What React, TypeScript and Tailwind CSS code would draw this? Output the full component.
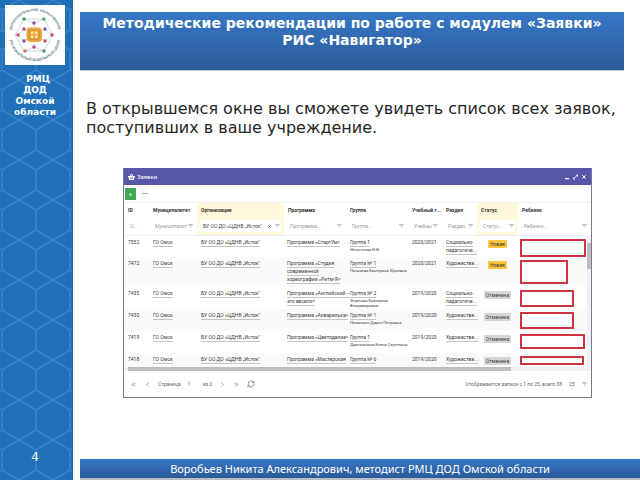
import React from 'react';
import { ChevronLeft, ChevronRight, ChevronsLeft, ChevronsRight, RefreshCw, X } from 'lucide-react';

interface Application {
  id: string;
  program: string[];
  group: string;
  teacher: string[];
  year: string;
  section: string[];
  status: string;
  rowClass: string;
  boxClass: string;
}

const ORGANIZATION = 'БУ ОО ДО «ЦДНВ „Исток"';

const applications: Application[] = [
  {
    id: '7552',
    program: ['Программа «СтартУм»'],
    group: 'Группа 1',
    teacher: ['Непытнова Н.В.'],
    year: '2020/2021',
    section: ['Социально-', 'педагогиче...'],
    status: 'Новая',
    rowClass: 'h-[22px]',
    boxClass: 'w-[66px] h-[18px]',
  },
  {
    id: '7472',
    program: ['Программа «Студия', 'современной', 'хореографии «Ритм-Я»'],
    group: 'Группа № 1',
    teacher: ['Пискаева Екатерина Юрьевна'],
    year: '2020/2021',
    section: ['Художестве...'],
    status: 'Новая',
    rowClass: 'h-[30px]',
    boxClass: 'w-[48px] h-[24px]',
  },
  {
    id: '7435',
    program: ['Программа «Английский –', 'это весело»'],
    group: 'Группа № 2',
    teacher: ['Эгаитова Екатерина', 'Владимировна'],
    year: '2019/2020',
    section: ['Социально-', 'педагогиче...'],
    status: 'Отменена',
    rowClass: 'h-[22px]',
    boxClass: 'w-[54px] h-[17px]',
  },
  {
    id: '7430',
    program: ['Программа «Акварелька»'],
    group: 'Группа № 1',
    teacher: ['Пешкович Дарья Петровна'],
    year: '2019/2020',
    section: ['Художестве...'],
    status: 'Отменена',
    rowClass: 'h-[22px]',
    boxClass: 'w-[54px] h-[17px]',
  },
  {
    id: '7419',
    program: ['Программа «Цветоделие»'],
    group: 'Группа 1',
    teacher: ['Двигальская Елена Сергеевна'],
    year: '2019/2020',
    section: ['Художестве...'],
    status: 'Отменена',
    rowClass: 'h-[22px]',
    boxClass: 'w-[65px] h-[15px]',
  },
  {
    id: '7418',
    program: ['Программа «Мастерская'],
    group: 'Группа № 6',
    teacher: [],
    year: '2019/2020',
    section: ['Художестве...'],
    status: 'Отменена',
    rowClass: 'h-[14px]',
    boxClass: 'w-[64px] h-[9px]',
  },
];

const columns = [
  { title: 'ID', filter: 'О...', width: 'w-[25px]' },
  { title: 'Муниципалитет', filter: 'Муниципалит', width: 'w-[48px]' },
  { title: 'Организация', filter: 'Организация', value: ORGANIZATION, width: 'w-[87px]', active: true },
  { title: 'Программа', filter: 'Программа...', width: 'w-[62px]' },
  { title: 'Группа', filter: 'Группа...', width: 'w-[62px]' },
  { title: 'Учебный г...', filter: 'Учебны', width: 'w-[34px]' },
  { title: 'Раздел', filter: 'Раздел...', width: 'w-[35px]' },
  { title: 'Статус', filter: 'Статус...', width: 'w-[41px]', active: true },
  { title: 'Ребенок', filter: 'Ребенок...', width: 'w-auto' },
];

const logoDots = [
  { x: 24, y: 19, color: '#3f9a5a' },
  { x: 44, y: 19, color: '#4aa564' },
  { x: 34, y: 23, color: '#8a4fa0' },
  { x: 24, y: 29, color: '#a0519c' },
  { x: 45, y: 29, color: '#7a52a8' },
  { x: 18, y: 35, color: '#c9486f' },
  { x: 52, y: 35, color: '#d04a62' },
  { x: 24, y: 41, color: '#8a4fa0' },
  { x: 45, y: 41, color: '#c9486f' },
  { x: 34, y: 47, color: '#c2487f' },
  { x: 25, y: 51, color: '#dd6d52' },
  { x: 44, y: 51, color: '#4a9a78' },
];

const Logo: React.FC = () => (
  <svg viewBox="5 5 60 60" className="w-[60px] h-[60px] bg-white">
    <defs>
      <path id="arc-top" d="M11 35a24 24 0 0 1 48 0" />
      <path id="arc-bottom" d="M9 35a26 26 0 0 0 52 0" />
    </defs>
    <g fill="#5d7f8d" fontFamily="Liberation Sans, sans-serif" fontWeight="700" fontSize="3.6" textAnchor="middle">
      <text>
        <textPath href="#arc-top" startOffset="50%">ДОПОЛНИТЕЛЬНОЕ ОБРАЗОВАНИЕ</textPath>
      </text>
      <text>
        <textPath href="#arc-bottom" startOffset="50%">РЕГИОНАЛЬНЫЙ МОДЕЛЬНЫЙ ЦЕНТР</textPath>
      </text>
    </g>
    <g fill="none" stroke="#a9b9c6" strokeWidth="0.6">
      <path d="M24 19h20l9 16-9 16H24l-9-16z" />
      <path d="M24 19l10 4 10-4M24 29l-6 6 6 6M45 29l7 6-7 6M25 51l9-4 10 4M34 23v24M24 29l21 12M45 29L24 41" />
    </g>
    {logoDots.map((dot) => (
      <circle key={`${dot.x}-${dot.y}`} cx={dot.x} cy={dot.y} r="1.7" fill={dot.color} />
    ))}
    <rect x="26.5" y="27.5" width="15.5" height="14.5" rx="4" fill="#e9a73b" />
    <rect x="29" y="30" width="10.5" height="9.5" rx="2" fill="none" stroke="#c9842c" strokeWidth="0.7" />
    <path d="M31 31.500h2.500v2.500H31zM35 31.500h2.500v2.500H35zM31 35.500h2.500V38H31zM35 35.500h2.500V38H35z" fill="#fbe6a6" />
  </svg>
);

const Sidebar: React.FC = () => (
  <aside className="relative w-[73px] shrink-0 flex flex-col items-center bg-[#1f70b9] border-r border-[#2b62a8] pt-[5px] pb-[15px] pr-[2px] text-white">
    <svg className="absolute inset-0 w-full h-full" aria-hidden="true">
      <defs>
        <pattern id="hexagons" x="2" y="10" width="34" height="40" patternUnits="userSpaceOnUse">
          <path d="M0 0v20M34 0v20M0 20l34 20M34 20L0 40" fill="none" stroke="#3f87ce" strokeWidth="1.2" />
        </pattern>
      </defs>
      <rect width="100%" height="100%" fill="url(#hexagons)" />
    </svg>
    <div className="relative">
      <Logo />
    </div>
    <p className="relative mt-[9px] font-bold text-[9px] leading-[11px] text-center">
      &nbsp;&nbsp;РМЦ
      <br />
      ДОД
      <br />
      Омской
      <br />
      области
    </p>
    <span className="relative mt-auto text-[12px] leading-4">4</span>
  </aside>
);

const FilterIcon: React.FC = () => (
  <svg viewBox="0 0 8 6" className="w-[5px] h-1 shrink-0" fill="none" stroke="#9a9a9a">
    <path d="M0 .5h8M1.500 2.500h5M3 5h2" />
  </svg>
);

const WindowTitle: React.FC = () => (
  <div className="flex items-center h-[17px] px-1 bg-[#5856a8] text-white">
    <svg viewBox="0 0 14 12" className="w-[7px] h-[6px]" fill="currentColor">
      <path d="M6 0h2l3 4h3v2h-1l-1.500 6h-9L1 6H0V4h3zm.9 1.500L5 4h4zM4 6.500v4h1v-4zm2.500 0v4h1v-4zm2.500 0v4h1v-4z" />
    </svg>
    <h2 className="ml-[2px] text-[6px] leading-[8px]">Заявки</h2>
    <div className="ml-auto flex items-center gap-[3px]">
      <button type="button" aria-label="Свернуть">
        <svg viewBox="0 0 6 6" className="w-[5px] h-[6px]" stroke="currentColor" strokeWidth="1.500">
          <path d="M0 5h5" />
        </svg>
      </button>
      <button type="button" aria-label="Развернуть">
        <svg viewBox="0 0 6 6" className="w-[5px] h-[6px]" fill="none" stroke="currentColor">
          <path d="M1 5l4-4M3.500 .7h2v2M.6 3.500v2h2" />
        </svg>
      </button>
      <button type="button" aria-label="Закрыть">
        <X className="w-[6px] h-[6px]" strokeWidth={4} />
      </button>
    </div>
  </div>
);

const Toolbar: React.FC = () => (
  <div className="flex items-center gap-1 h-[17px] px-px">
    <button type="button" aria-label="Добавить" className="w-[11px] h-3 bg-[#43a852] text-white text-[6px] leading-[8px]">
      +
    </button>
    <button type="button" aria-label="Ещё" className="w-[10px] h-3 bg-[#fafafa] text-[#777] text-[6px] leading-[8px]">
      •••
    </button>
  </div>
);

const CellLink: React.FC<{ href: string; lines: string[] }> = ({ href, lines }) => (
  <a href={href} className="block">
    {lines.map((line) => (
      <span key={line} className="block w-fit leading-[7px] border-b border-[#c4c4c4]">
        {line}
      </span>
    ))}
  </a>
);

const ApplicationsTable: React.FC = () => (
  <div className="relative overflow-hidden border-t border-[#f0f0f0]">
    <table className="w-full table-fixed border-collapse text-left">
      <colgroup>
        {columns.map((column) => (
          <col key={column.title} className={column.width} />
        ))}
      </colgroup>
      <thead>
        <tr className="h-[15px]">
          {columns.map((column) => (
            <th
              key={column.title}
              className={`pl-1 pr-0 py-0 font-bold leading-[7px] text-[#333] whitespace-nowrap ${column.active ? 'bg-[#fff8dc]' : ''}`}
            >
              {column.title}
            </th>
          ))}
        </tr>
        <tr className="h-[17px] border-b border-[#eeeeee]">
          {columns.map((column) => (
            <td key={column.title} className={`px-[3px] py-0 ${column.active ? 'bg-[#fff8dc]' : ''}`}>
              <div className="flex items-center h-3 pl-[3px] pr-px bg-white">
                <input
                  type="text"
                  aria-label={column.title}
                  placeholder={column.filter}
                  defaultValue={column.value}
                  className="min-w-0 flex-1 leading-[8px] text-[#444] placeholder:text-[#999] outline-none"
                />
                {column.value && <X className="w-[5px] h-[5px] mr-[3px] text-[#666]" strokeWidth={3} />}
                {column.title !== 'ID' && <FilterIcon />}
              </div>
            </td>
          ))}
        </tr>
      </thead>
      <tbody className="leading-[7px] whitespace-nowrap">
        {applications.map((item) => (
          <tr key={item.id} className={`align-top even:bg-[#fafafa] ${item.rowClass}`}>
            <td className="pl-1 pr-0 pt-[3px] pb-0">{item.id}</td>
            <td className="pl-1 pr-0 pt-[3px] pb-0">
              <CellLink href="#municipality" lines={['ГО Омск']} />
            </td>
            <td className="pl-1 pr-0 pt-[3px] pb-0">
              <CellLink href="#organization" lines={[ORGANIZATION]} />
            </td>
            <td className="pl-[3px] pr-0 pt-[3px] pb-0">
              <CellLink href="#program" lines={item.program} />
            </td>
            <td className="pl-1 pr-0 pt-[3px] pb-0">
              <CellLink href="#group" lines={[item.group]} />
              {item.teacher.map((line) => (
                <div key={line} className="text-[4px] leading-[5px]">{line}</div>
              ))}
            </td>
            <td className="pl-1 pr-0 pt-[3px] pb-0">{item.year}</td>
            <td className="pl-1 pr-0 pt-[3px] pb-0">
              <CellLink href="#section" lines={item.section} />
            </td>
            <td className="px-0 pt-1 pb-0">
              <div className={`w-fit mx-auto px-[2px] rounded-[1px] leading-[8px] ${item.status === 'Новая' ? 'bg-[#f8c63d]' : 'bg-[#d6d6d6]'}`}>
                {item.status}
              </div>
            </td>
            <td className="px-[2px] pt-[3px] pb-0">
              <div className={`bg-white border-2 border-[#cf3440] ${item.boxClass}`} />
            </td>
          </tr>
        ))}
      </tbody>
    </table>
    <div className="absolute right-0 top-[33px] bottom-0 w-1 bg-[#f1f1f1]">
      <div className="mt-[7px] h-[26px] bg-[#bdbdbd]" />
    </div>
  </div>
);

const Pager: React.FC = () => (
  <div className="flex items-center h-[26px] pl-[6px] pr-1 leading-[8px] text-[#666]">
    <div className="flex items-center gap-[7px]">
      <button type="button" aria-label="Первая страница"><ChevronsLeft className="w-[7px] h-[7px]" /></button>
      <button type="button" aria-label="Предыдущая страница"><ChevronLeft className="w-[7px] h-[7px]" /></button>
      <label htmlFor="page">Страница</label>
      <input id="page" type="text" defaultValue="1" className="w-[8px] outline-none" />
      <span>из 2</span>
      <button type="button" aria-label="Следующая страница"><ChevronRight className="w-[7px] h-[7px]" /></button>
      <button type="button" aria-label="Последняя страница"><ChevronsRight className="w-[7px] h-[7px]" /></button>
      <button type="button" aria-label="Обновить"><RefreshCw className="w-[8px] h-[8px]" /></button>
    </div>
    <div className="ml-auto flex items-center gap-[7px]">
      <span>Отображаются записи с 1 по 25, всего 38</span>
      <select aria-label="Записей на странице" className="appearance-none outline-none">
        <option>25</option>
      </select>
      <FilterIcon />
    </div>
  </div>
);

const ApplicationsWindow: React.FC = () => (
  <section className="ml-[50px] mr-12 mt-[31px] border-x border-b border-[#77779a] bg-white font-['Roboto',sans-serif] text-[5px] text-[#3a3a3a]">
    <WindowTitle />
    <Toolbar />
    <ApplicationsTable />
    <div className="h-1 bg-[#f1f1f1] px-1">
      <div className="h-full w-5/6 bg-[#bdbdbd]" />
    </div>
    <Pager />
  </section>
);

const App: React.FC = () => {
  return (
    <div className="flex min-h-screen bg-white font-['DejaVu_Sans',sans-serif]">
      <Sidebar />
      <main className="flex-1 min-w-0 flex flex-col">
        <header className="ml-[7px] mr-4 mt-3 px-2 pt-[3px] pb-[21px] bg-linear-to-b from-[#3678c6] to-[#2b5a99] border-b border-[#c5cbe0] text-white">
          <h1 className="text-center font-bold text-[14px] leading-[17px]">
            Методические рекомендации по работе с модулем «Заявки»
            <br />
            РИС «Навигатор»
          </h1>
        </header>
        <p className="ml-[13px] mr-4 mt-7 text-[16px] leading-[19px] text-[#262626]">
          В открывшемся окне вы сможете увидеть список всех заявок, поступивших в ваше учреждение.
        </p>
        <ApplicationsWindow />
        <footer className="ml-[7px] mt-auto border-b-2 border-[#b9bcc4] bg-linear-to-b from-[#3678c6] to-[#2b5a99] text-center text-white font-['Noto_Sans',sans-serif] text-[11px] leading-[19px]">
          Воробьев Никита Александрович, методист РМЦ ДОД Омской области
        </footer>
      </main>
    </div>
  );
};

export default App;
